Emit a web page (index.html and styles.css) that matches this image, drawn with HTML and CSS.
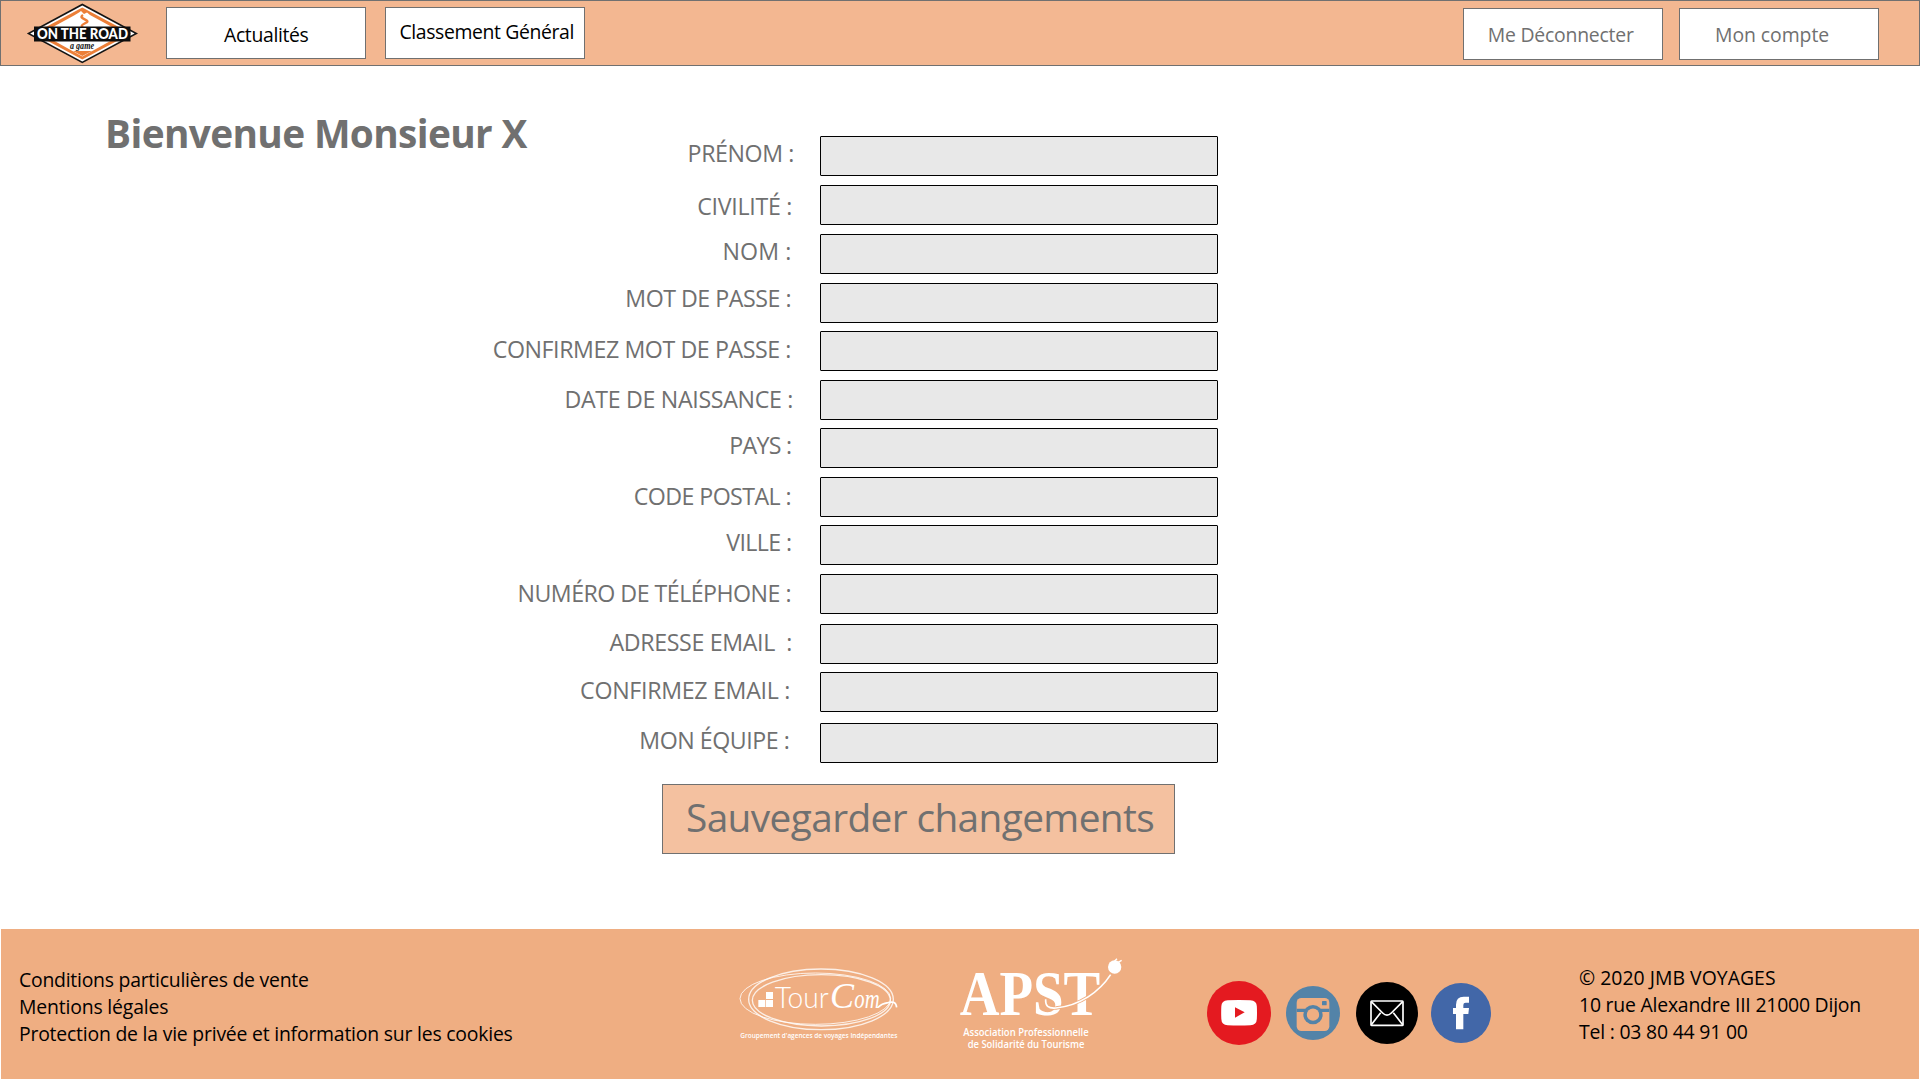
FILE: index.html
```html
<!DOCTYPE html>
<html lang="fr">
<head>
  <meta charset="utf-8">
  <title>On the Road – Mon compte</title>
  <link rel="stylesheet" href="styles.css">
</head>
<body>
  <header class="topbar">
    <a class="brand" href="#">
      <svg class="brand-logo" viewBox="0 0 125 64" width="125" height="64" role="img" aria-label="On the Road, a game">
        <path d="M62.3 3.6 L118 33.5 L62.3 63.2 L6.8 33.5 Z" fill="#141414"/>
        <path d="M62.3 5.4 L114.6 33.5 L62.3 61.4 L10.2 33.5 Z" fill="#fff"/>
        <path d="M62.3 7.4 L111 33.5 L62.3 59.4 L13.8 33.5 Z" fill="#ec7f38"/>
        <path d="M59 12.500 L61 11 L64 14 L67 12.500 L70 15 L104 33.5 L62.3 56.500 L21 33.5 L54 15.5 Z" fill="#fff"/>
        <path d="M63 15 C57 19 71 19.500 66.500 22.500 C63 24.500 58 26 66 29" fill="none" stroke="#ec7f38" stroke-width="2.400"/>
        <path d="M53 51 H72 L62.300 56 Z" fill="#ec7f38"/>
        <path d="M14 26.500 H110.500 V41.500 H14 Z" fill="#0d0d0d"/>
        <text class="brand-name" x="17" y="39" textLength="91" lengthAdjust="spacingAndGlyphs">ON THE ROAD</text>
        <text class="brand-sub" x="50" y="48.500" textLength="24" lengthAdjust="spacingAndGlyphs">a game</text>
      </svg>
    </a>
    <nav class="nav nav-main">
      <a class="nav-link nav-news" href="#">Actualités</a>
      <a class="nav-link nav-ranking" href="#">Classement Général</a>
    </nav>
    <nav class="nav nav-user">
      <a class="nav-link nav-logout" href="#">Me Déconnecter</a>
      <a class="nav-link nav-account" href="#">Mon compte</a>
    </nav>
  </header>

  <main class="page">
    <h1 class="welcome">Bienvenue Monsieur X</h1>
    <form class="profile">
      <div class="field f-prenom"><label for="prenom">PRÉNOM :</label><input id="prenom" type="text"></div>
      <div class="field f-civilite"><label for="civilite">CIVILITÉ :</label><input id="civilite" type="text"></div>
      <div class="field f-nom"><label for="nom">NOM :</label><input id="nom" type="text"></div>
      <div class="field f-mdp"><label for="mdp">MOT DE PASSE :</label><input id="mdp" type="password"></div>
      <div class="field f-mdp2"><label for="mdp2">CONFIRMEZ MOT DE PASSE :</label><input id="mdp2" type="password"></div>
      <div class="field f-naissance"><label for="naissance">DATE DE NAISSANCE :</label><input id="naissance" type="text"></div>
      <div class="field f-pays"><label for="pays">PAYS :</label><input id="pays" type="text"></div>
      <div class="field f-cp"><label for="cp">CODE POSTAL :</label><input id="cp" type="text"></div>
      <div class="field f-ville"><label for="ville">VILLE :</label><input id="ville" type="text"></div>
      <div class="field f-tel"><label for="tel">NUMÉRO DE TÉLÉPHONE :</label><input id="tel" type="text"></div>
      <div class="field f-email"><label for="email">ADRESSE EMAIL&nbsp; :</label><input id="email" type="text"></div>
      <div class="field f-email2"><label for="email2">CONFIRMEZ EMAIL :</label><input id="email2" type="text"></div>
      <div class="field f-equipe"><label for="equipe">MON ÉQUIPE :</label><input id="equipe" type="text"></div>
      <button class="save" type="button">Sauvegarder changements</button>
    </form>
  </main>

  <footer class="footer">
    <ul class="legal">
      <li class="legal-terms">Conditions particulières de vente</li>
      <li class="legal-notice">Mentions légales</li>
      <li class="legal-privacy">Protection de la vie privée et information sur les cookies</li>
    </ul>
    <svg class="tourcom" viewBox="45 60 510 285" width="170" height="95" role="img" aria-label="TourCom">
      <g fill="none" stroke="#fff" stroke-opacity=".8">
        <ellipse cx="286" cy="176" rx="226" ry="77" stroke-width="3"/>
        <ellipse cx="303" cy="178" rx="217" ry="91" stroke-width="4"/>
        <ellipse cx="304" cy="181" rx="207" ry="77" stroke-width="4"/>
      </g>
      <path d="M138 156h21v21h-21zM115 180h21v21h-21zM138 180h21v21h-21z" fill="#fff"/>
      <text class="tc-tour" x="164" y="203" textLength="162" lengthAdjust="spacingAndGlyphs">Tour</text>
      <text class="tc-com" y="203"><tspan x="330" textLength="72" lengthAdjust="spacingAndGlyphs">C</tspan><tspan class="tc-om" x="403" textLength="76" lengthAdjust="spacingAndGlyphs">om</tspan></text>
      <path d="M474 202 C484 192 492 190 504 188 C520 184 528 186 530 202" fill="none" stroke="#fff" stroke-width="5"/>
      <text class="tc-tag" x="61" y="294" textLength="471" lengthAdjust="spacingAndGlyphs">Groupement d'agences de voyages Indépendantes</text>
    </svg>
    <svg class="apst" viewBox="705 30 525 300" width="175" height="100" role="img" aria-label="APST">
      <text class="apst-name" x="719" y="224" textLength="422" lengthAdjust="spacingAndGlyphs">APST</text>
      <path d="M977 178 C976 198 984 206 1008 204 C1080 196 1138 156 1172 104" fill="none" stroke="#efae82" stroke-width="10"/>
      <path d="M977 178 C976 198 984 206 1008 204 C1080 196 1138 156 1172 104" fill="none" stroke="#fff" stroke-width="5"/>
      <circle cx="1184" cy="81" r="20" fill="#fff"/>
      <path d="M1184 63 l7 -7 M1194 67 l11 -6" stroke="#fff" stroke-width="4"/>
      <text class="apst-tag" x="730" y="289" textLength="376" lengthAdjust="spacingAndGlyphs">Association Professionnelle</text>
      <text class="apst-tag" x="743" y="323" textLength="350" lengthAdjust="spacingAndGlyphs">de Solidarité du Tourisme</text>
    </svg>
    <div class="social">
      <svg viewBox="0 0 192 192" width="64" height="64" role="img" aria-label="YouTube">
        <circle cx="96" cy="96" r="96" fill="#e41a20"/>
        <path d="M62 57.500 Q96 56 130 57.500 Q149 58 149.500 76 Q150.500 95 149.500 114 Q149 132 130 133 Q96 134.500 62 133 Q43.500 132 43 114 Q42 95 43 76 Q43.500 58 62 57.500 Z" fill="#fff"/>
        <path d="M84 79 L113 94 L84 110 Z" fill="#e41a20"/>
      </svg>
      <svg viewBox="0 0 162 162" width="54" height="54" role="img" aria-label="Instagram">
        <circle cx="81" cy="81" r="81" fill="#5383a8"/>
        <rect x="32" y="36" width="98" height="99" rx="14" fill="#efae82"/>
        <path d="M32 68 H130 V78 H32 Z" fill="#5383a8"/>
        <circle cx="81" cy="86" r="29" fill="#5383a8"/>
        <circle cx="81" cy="86" r="18.500" fill="#efae82"/>
        <rect x="108" y="45" width="14" height="13" rx="2" fill="#5383a8"/>
      </svg>
      <svg class="social-mail" viewBox="0 0 186 186" width="62" height="62" role="img" aria-label="Email">
        <circle cx="93" cy="93" r="93" fill="#000"/>
        <g fill="none" stroke="#fff" stroke-width="5" stroke-linejoin="round">
          <rect x="45" y="57" width="96" height="73" rx="2"/>
          <path d="M46 59 L80 93 Q93 106 106 93 L140 59 M46 128 L74 92 M140 128 L112 92"/>
        </g>
      </svg>
      <svg class="social-facebook" viewBox="0 0 180 180" width="60" height="60" role="img" aria-label="Facebook">
        <circle cx="90" cy="90" r="90" fill="#4267a8"/>
        <path d="M75 139 V93 H66 V75 H75 V65 Q75 41 98 41 H114 V59 H104 Q97 59 97 66 V75 H114 L112 93 H97 V139 Z" fill="#fff"/>
      </svg>
    </div>
    <address class="contact">
      <span class="contact-name">© 2020 JMB VOYAGES</span>
      <span class="contact-street">10 rue Alexandre III 21000 Dijon</span>
      <span class="contact-phone">Tel : 03 80 44 91 00</span>
    </address>
  </footer>
</body>
</html>
```
FILE: styles.css
```css
* {
  box-sizing: border-box;
}

body {
  margin: 0;
  min-height: 1080px;
  background: #fff;
  color: #707070;
  font-family: "Open Sans", "Noto Sans", sans-serif;
  font-size: 19.4px;
  line-height: 26px;
  white-space: nowrap;
}

/* Top bar */
.topbar {
  display: flex;
  align-items: flex-start;
  height: 66px;
  border: 1px solid #707070;
  background: #f3b791;
}

.brand {
  width: 125px;
  margin: -1px 0 0 19px;
}

.brand-logo {
  display: block;
}

.brand-name {
  fill: #fff;
  font: 900 14.500px Lato, sans-serif;
}

.brand-sub {
  fill: #111;
  font: italic 700 10px "Liberation Serif", serif;
}

.nav {
  display: flex;
}

.nav-main {
  gap: 19px;
  margin: 6px 0 0 21px;
}

.nav-user {
  gap: 16px;
  margin: 7px 40px 0 auto;
}

.nav-link {
  width: 200px;
  height: 52px;
  border: 1px solid #707070;
  background: #fff;
  color: #707070;
  text-decoration: none;
}

.nav-news {
  padding: 14px 0 0 57px;
  color: #000;
  letter-spacing: -0.35px;
}

.nav-ranking {
  padding: 11px 0 0 13.5px;
  color: #000;
  letter-spacing: -0.38px;
}

.nav-logout {
  padding: 13px 0 0 23.7px;
  letter-spacing: -0.21px;
}

.nav-account {
  padding: 13px 0 0 35px;
  letter-spacing: -0.05px;
}

/* Account page */
.page {
  display: flex;
  align-items: flex-start;
  height: 863px;
  padding-left: 105px;
}

.welcome {
  width: 375px;
  margin: 41px 0 0;
  font-size: 38.8px;
  font-weight: 700;
  line-height: 53px;
  letter-spacing: -0.64px;
}

.profile {
  width: 738px;
  margin-top: 70px;
}

.field {
  --gap: 9px;
  --x: 0px;
  --y: 0px;
  display: flex;
  height: 40px;
  margin-bottom: var(--gap);
}

.field label {
  flex: 1;
  margin-top: calc(var(--y) + 1px);
  padding-right: calc(29px - var(--x));
  font-size: 23.2px;
  line-height: 40px;
  text-align: right;
}

.field input {
  width: 398px;
  height: 40px;
  padding: 0 8px;
  border: 1px solid #000;
  border-radius: 1px;
  background: #e8e8e8;
  font: inherit;
}

.f-prenom { --x: 3px; --y: -4px; letter-spacing: -0.4px; }
.f-civilite { --x: 1px; --y: 0px; letter-spacing: -0.3px; }
.f-nom { --x: 0.5px; --y: -4px; letter-spacing: 0.1px; }
.f-mdp { --y: -6px; --gap: 8px; letter-spacing: -0.48px; }
.f-mdp2 { --y: -3px; letter-spacing: -0.42px; }
.f-naissance { --x: 2px; --y: -2px; --gap: 8px; letter-spacing: -0.32px; }
.f-pays { --x: 0.5px; --y: -4px; letter-spacing: -0.7px; }
.f-cp { --y: -2px; --gap: 8px; letter-spacing: -0.58px; }
.f-ville { --x: 0.5px; --y: -4px; letter-spacing: -0.6px; }
.f-tel { --y: -2px; --gap: 10px; letter-spacing: -0.52px; }
.f-email { --x: 1px; --y: -3px; --gap: 8px; letter-spacing: -0.35px; }
.f-email2 { --x: -1px; --y: -3px; --gap: 11px; letter-spacing: -0.3px; }
.f-equipe { --x: -1.5px; --y: -4px; --gap: 21px; letter-spacing: -0.45px; }

.save {
  display: block;
  width: 513px;
  height: 70px;
  margin-left: 182px;
  padding: 0 0 3px 23px;
  border: 1px solid #707070;
  background: #f4c1a0;
  color: #707070;
  font: 38.8px/65px "Open Sans", "Noto Sans", sans-serif;
  letter-spacing: -0.61px;
  text-align: left;
}

/* Footer */
.footer {
  display: flex;
  align-items: flex-start;
  height: 150px;
  margin: 0 1px;
  background: #efae82;
  color: #000;
  line-height: 27px;
}

.legal {
  width: 734px;
  margin: 0;
  padding: 37px 0 0 18px;
  list-style: none;
}

.legal-terms { letter-spacing: -0.24px; }
.legal-notice { letter-spacing: -0.17px; }
.legal-privacy { letter-spacing: -0.21px; }

.tourcom {
  margin-top: 31px;
}

.tourcom text,
.apst text {
  fill: #fff;
}

.tc-tour { font: 300 86px Lato, sans-serif; }
.tc-com { font: italic 400 108px "Liberation Serif", serif; }
.tc-om { font-size: 84px; }
.tc-tag { font: 600 21px "Open Sans", sans-serif; }

.apst {
  margin: 21px 0 0 50px;
}

.apst-name { font: 700 189px "Liberation Serif", serif; }
.apst-tag { font: 600 31px "Open Sans", sans-serif; }

.social {
  display: flex;
  align-items: center;
  gap: 15px;
  width: 372px;
  margin: 52px 0 0 77px;
}

.social-mail {
  margin-left: 1px;
}

.social-facebook {
  margin-left: -2px;
}

.contact {
  display: flex;
  flex-direction: column;
  padding-top: 35px;
  font-style: normal;
}

.contact-name { letter-spacing: 0.03px; }
.contact-street { letter-spacing: -0.21px; }
.contact-phone { letter-spacing: -0.2px; }
```
